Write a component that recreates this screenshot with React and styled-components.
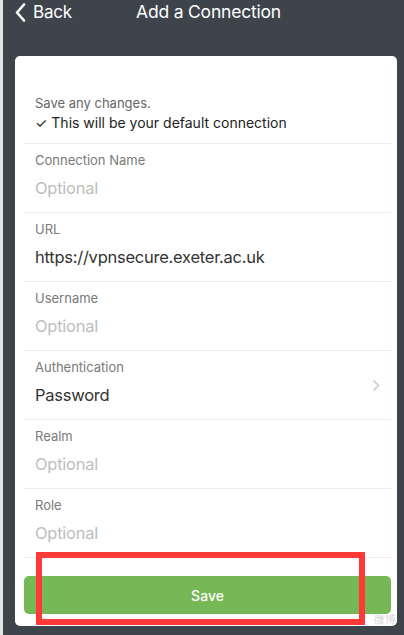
import React from 'react'
import styled, { createGlobalStyle } from 'styled-components'

const Global = createGlobalStyle`
  html, body { margin: 0; padding: 0; background: #3e444c; }
  body { font-family: Inter, "Noto Sans", sans-serif; }
`

const Screen = styled.div`
  position: relative;
  width: 404px;
  height: 635px;
  box-sizing: border-box;
  border-left: 3px solid #e4e5e6;
  background: #3e444c;
  overflow: hidden;
`

const TopBar = styled.header`
  position: relative;
  display: flex;
  align-items: center;
  height: 24px;
  padding: 0 0 0 12px;
  margin-bottom: 32px;
  color: #fff;
`

const BackLink = styled.div`
  display: flex;
  align-items: center;
  gap: 7px;
  font-size: 17px;
  letter-spacing: -0.2px;
  color: #fff;
`

const Title = styled.h1`
  position: absolute;
  left: 0;
  right: 0;
  top: 0;
  margin: 0;
  text-align: center;
  font-size: 17.5px;
  font-weight: 400;
  letter-spacing: -0.2px;
  line-height: 24px;
  padding-left: 10px;
`

const Card = styled.main`
  margin: 0 7px 0 12px;
  height: 570px;
  background: #fff;
  border-radius: 5px;
  padding: 38px 6px 0 9px;
  box-sizing: border-box;
`

const Intro = styled.div`
  padding: 0 11px 10px;
  border-bottom: 1px solid #ececec;
`

const Note = styled.div`
  font-size: 13px;
  line-height: 18px;
  color: #666;
`

const Default = styled.div`
  margin-top: 1px;
  font-size: 14px;
  line-height: 20px;
  color: #222;
`

const Row = styled.div`
  display: flex;
  align-items: center;
  height: 68px;
  padding: 0 11px;
  border-bottom: 1px solid #ececec;
`

const Field = styled.div`
  flex: 1;
  display: flex;
  flex-direction: column;
  padding-bottom: 7px;
`

const Label = styled.div`
  font-size: 13px;
  line-height: 18px;
  color: #7a7a7a;
`

const Value = styled.div`
  margin-top: 8px;
  font-size: 16.5px;
  letter-spacing: -0.25px;
  line-height: 22px;
  color: ${p => (p.$placeholder ? '#bdbdbd' : '#333')};
`

const SaveButton = styled.button`
  display: block;
  width: 100%;
  height: 38px;
  margin-top: 18px;
  border: 0;
  border-radius: 5px;
  background: #76b856;
  color: #fff;
  font-family: inherit;
  font-size: 14px;
  font-weight: 500;
`

const Highlight = styled.div`
  position: absolute;
  left: 33px;
  top: 552px;
  width: 317px;
  height: 61px;
  border: 6px solid #ff3838;
  pointer-events: none;
`

const Watermark = styled.div`
  position: absolute;
  right: 8px;
  bottom: 8px;
  font-size: 11px;
  color: rgba(200, 200, 200, 0.8);
`

const fields = [
  { label: 'Connection Name', value: 'Optional', empty: true },
  { label: 'URL', value: 'https://vpnsecure.exeter.ac.uk' },
  { label: 'Username', value: 'Optional', empty: true },
  { label: 'Authentication', value: 'Password', arrow: true },
  { label: 'Realm', value: 'Optional', empty: true },
  { label: 'Role', value: 'Optional', empty: true },
]

export default function App() {
  return (
    <Screen>
      <Global />
      <TopBar>
        <BackLink>
          <svg width="11" height="19" viewBox="0 0 11 19">
            <path d="M9 1.5L2 9.5l7 8" fill="none" stroke="#fff" strokeWidth="2.6" strokeLinecap="round" strokeLinejoin="round" />
          </svg>
          Back
        </BackLink>
        <Title>Add a Connection</Title>
      </TopBar>
      <Card>
        <Intro>
          <Note>Save any changes.</Note>
          <Default>✓ This will be your default connection</Default>
        </Intro>
        {fields.map(f => (
          <Row key={f.label}>
            <Field>
              <Label>{f.label}</Label>
              <Value $placeholder={f.empty}>{f.value}</Value>
            </Field>
            {f.arrow && (
              <svg width="8" height="13" viewBox="0 0 8 13">
                <path d="M1.5 1.5l5 5-5 5" fill="none" stroke="#c4c4c4" strokeWidth="1.4" />
              </svg>
            )}
          </Row>
        ))}
        <SaveButton>Save</SaveButton>
      </Card>
      <Highlight />
      <Watermark>微博</Watermark>
    </Screen>
  )
}
